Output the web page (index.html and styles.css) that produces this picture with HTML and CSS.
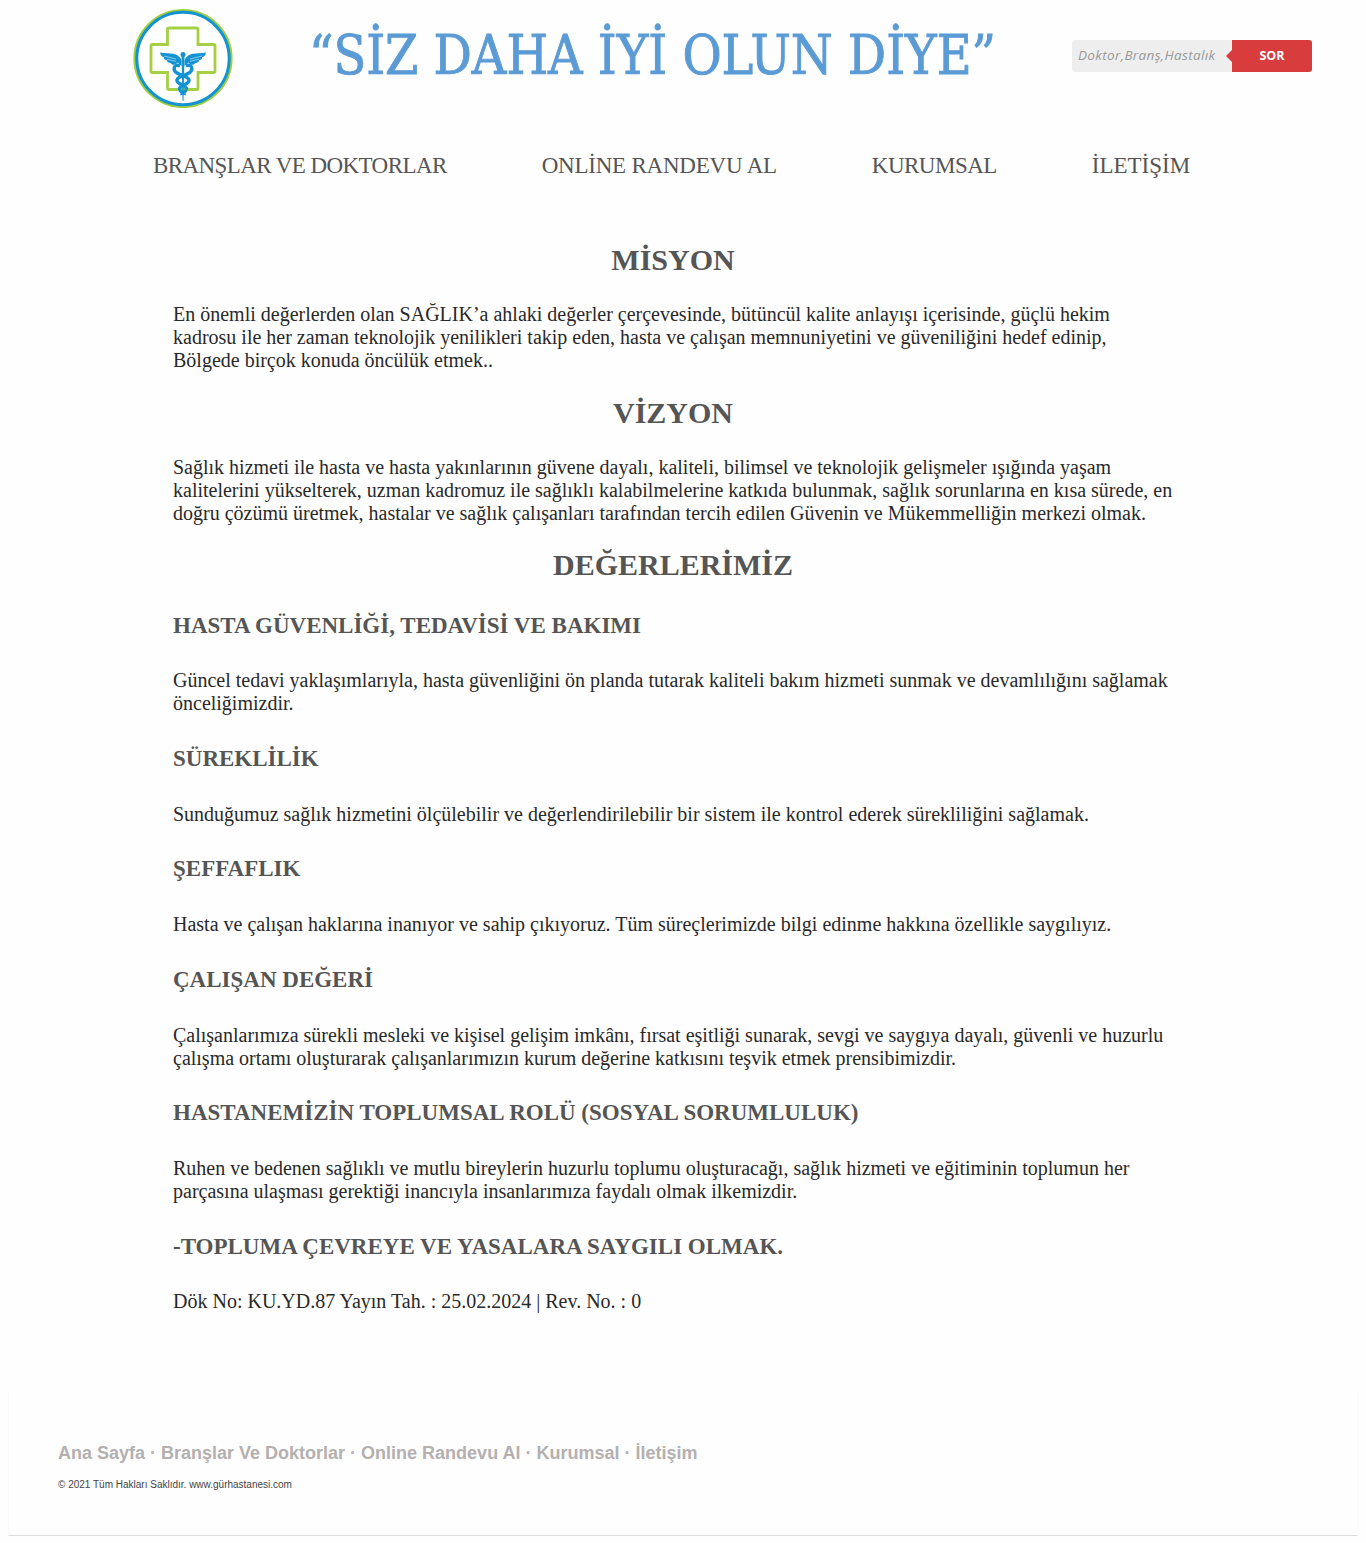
FILE: index.html
```html
<!DOCTYPE html>
<html lang="tr">
<head>
<meta charset="utf-8">
<title>Misyon ve Vizyon</title>
<link rel="stylesheet" href="styles.css">
</head>
<body>
<header class="top">
  <svg class="logo" viewBox="0 0 100 100" width="100" height="100" role="img" aria-label="Logo">
    <circle cx="50" cy="50.5" r="48.3" fill="#fff" stroke="#9fce3d" stroke-width="2.6"/>
    <circle cx="50" cy="50.5" r="46.2" fill="none" stroke="#1493d3" stroke-width="3"/>
    <path d="M36 20H63.500Q65 20 65 21.500V36.500H80.500Q82 36.500 82 38V63Q82 64.500 80.500 64.500H65V80Q65 81.500 63.500 81.500H36Q34.500 81.500 34.500 80V64.500H19.500Q18 64.500 18 63V38Q18 36.500 19.500 36.500H34.500V21.500Q34.500 20 36 20Z" fill="none" stroke="#a5d044" stroke-width="2.800"/>
    <path d="M48.500 52C45 44 37 46 27 44.500C27.500 47.500 29 48.500 31 49.300C30.500 51 32 52 34 52.300C34 54 35.500 55 38 55.200C39 57.500 43 57 44.500 54.500L48.500 58ZM51.500 52C55 44 63 46 73 44.500C72.500 47.500 71 48.500 69 49.300C69.500 51 68 52 66 52.300C66 54 64.500 55 62 55.200C61 57.500 57 57 55.500 54.500L51.500 58Z" fill="#1493d3"/>
    <path d="M31 48L43 51M69 48L57 51M34 51.300L43 53.300M66 51.300L57 53.300" stroke="#fff" stroke-width=".5"/>
    <circle cx="50" cy="46.500" r="2.500" fill="#1493d3"/>
    <path d="M48.500 47H51.500L50.500 93H49.500Z" fill="#1493d3"/>
    <path d="M47 58C41 55 39 62 44 65S57 69 56 73S46 77 46.500 81S52 84 51 87" fill="none" stroke="#1493d3" stroke-width="3.300"/>
    <path d="M53 58C59 55 61 62 56 65S43 69 44 73S54 77 53.500 81S48 84 49 87" fill="none" stroke="#1493d3" stroke-width="3.300"/>
  </svg>
  <svg class="slogan" width="684" height="80" viewBox="0 0 684 80">
    <text class="slogan-text" x="-3" y="64" textLength="687" lengthAdjust="spacingAndGlyphs">“SİZ DAHA İYİ OLUN DİYE”</text>
  </svg>
  <form class="search">
    <input class="search-input" type="text" placeholder="Doktor,Branş,Hastalık">
    <button class="search-button" type="button">SOR</button>
  </form>
</header>
<nav class="menu">
  <a>BRANŞLAR VE DOKTORLAR</a>
  <a>ONLİNE RANDEVU AL</a>
  <a>KURUMSAL</a>
  <a>İLETİŞİM</a>
</nav>
<main class="content">
  <h1>MİSYON</h1>
  <p>En önemli değerlerden olan SAĞLIK’a ahlaki değerler çerçevesinde, bütüncül kalite anlayışı içerisinde, güçlü hekim<br>kadrosu ile her zaman teknolojik yenilikleri takip eden, hasta ve çalışan memnuniyetini ve güveniliğini hedef edinip,<br>Bölgede birçok konuda öncülük etmek..</p>
  <h1>VİZYON</h1>
  <p>Sağlık hizmeti ile hasta ve hasta yakınlarının güvene dayalı, kaliteli, bilimsel ve teknolojik gelişmeler ışığında yaşam<br>kalitelerini yükselterek, uzman kadromuz ile sağlıklı kalabilmelerine katkıda bulunmak, sağlık sorunlarına en kısa sürede, en<br>doğru çözümü üretmek, hastalar ve sağlık çalışanları tarafından tercih edilen Güvenin ve Mükemmelliğin merkezi olmak.</p>
  <h1>DEĞERLERİMİZ</h1>
  <h2>HASTA GÜVENLİĞİ, TEDAVİSİ VE BAKIMI</h2>
  <p>Güncel tedavi yaklaşımlarıyla, hasta güvenliğini ön planda tutarak kaliteli bakım hizmeti sunmak ve devamlılığını sağlamak<br>önceliğimizdir.</p>
  <h2>SÜREKLİLİK</h2>
  <p>Sunduğumuz sağlık hizmetini ölçülebilir ve değerlendirilebilir bir sistem ile kontrol ederek sürekliliğini sağlamak.</p>
  <h2>ŞEFFAFLIK</h2>
  <p>Hasta ve çalışan haklarına inanıyor ve sahip çıkıyoruz. Tüm süreçlerimizde bilgi edinme hakkına özellikle saygılıyız.</p>
  <h2>ÇALIŞAN DEĞERİ</h2>
  <p>Çalışanlarımıza sürekli mesleki ve kişisel gelişim imkânı, fırsat eşitliği sunarak, sevgi ve saygıya dayalı, güvenli ve huzurlu<br>çalışma ortamı oluşturarak çalışanlarımızın kurum değerine katkısını teşvik etmek prensibimizdir.</p>
  <h2>HASTANEMİZİN TOPLUMSAL ROLÜ (SOSYAL SORUMLULUK)</h2>
  <p>Ruhen ve bedenen sağlıklı ve mutlu bireylerin huzurlu toplumu oluşturacağı, sağlık hizmeti ve eğitiminin toplumun her<br>parçasına ulaşması gerektiği inancıyla insanlarımıza faydalı olmak ilkemizdir.</p>
  <h2>-TOPLUMA ÇEVREYE VE YASALARA SAYGILI OLMAK.</h2>
  <p>Dök No: KU.YD.87 Yayın Tah. : 25.02.2024 | Rev. No. : 0</p>
</main>
<footer class="footer">
  <p class="footer-links">Ana Sayfa · Branşlar Ve Doktorlar · Online Randevu Al · Kurumsal · İletişim</p>
  <p class="footer-copy">© 2021 Tüm Hakları Saklıdır. www.gürhastanesi.com</p>
</footer>
</body>
</html>
```
FILE: styles.css
```css
* { box-sizing: border-box; }
body {
  margin: 0;
  background: #fefefe;
  color: #292929;
  font-family: "Liberation Serif", serif;
}
.top {
  display: flex;
  align-items: flex-start;
  height: 140px;
  padding: 8px 54px 0 133px;
}
.logo { flex: none; }
.slogan { flex: none; margin: 2px 0 0 79px; overflow: visible; }
.slogan-text {
  font-family: "DejaVu Serif Condensed", "DejaVu Serif", serif;
  font-stretch: condensed;
  font-size: 55px;
  fill: #5b9bd5;
  stroke: #5b9bd5;
  stroke-width: .9px;
}
.search { display: flex; margin: 32px 0 0 auto; width: 240px; height: 32px; }
.search-input {
  width: 160px;
  padding: 0 6px 2px;
  border: 0;
  border-radius: 3px 0 0 3px;
  background: #eee;
  font: italic 13.5px "Open Sans", sans-serif;
  letter-spacing: .35px;
}
.search-input::placeholder { color: #999; opacity: 1; }
.search-button {
  position: relative;
  width: 80px;
  padding: 0 0 1px;
  border: 0;
  border-radius: 0 3px 3px 0;
  background: #d83c3c;
  color: #fff;
  font: bold 12.5px "Open Sans", sans-serif;
}
.search-button::before {
  content: "";
  position: absolute;
  left: -6px;
  top: 10px;
  border: solid transparent;
  border-width: 6px 6px 6px 0;
  border-right-color: #d83c3c;
}
.menu {
  display: flex;
  gap: 95px;
  height: 103px;
  padding: 13px 0 0 153px;
  font-size: 23px;
  line-height: 26px;
  color: #555;
  white-space: nowrap;
}
.menu a:nth-child(1) { letter-spacing: -.58px; }
.menu a:nth-child(2) { letter-spacing: -.22px; }
.menu a:nth-child(3) { letter-spacing: -.52px; }
.content { width: 1000px; margin-left: 173px; height: 1149px; }
.content h1 {
  margin: 26px 0 25px;
  font-size: 30px;
  line-height: 34px;
  text-align: center;
  color: #555;
}
.content h1:first-child { margin-top: 0; }
.content h1 + p { margin-bottom: 25px; }
.content h1:nth-of-type(2) { margin-top: 25px; }
.content h1:nth-of-type(3) { margin: 24px 0; }
.content h2 {
  margin: 30.6px 0 31.8px;
  font-size: 23px;
  line-height: 25px;
  color: #555;
}
.content p { margin: 0; font-size: 20px; line-height: 23px; white-space: nowrap; }
.content h1 + p { padding-top: .6px; margin-bottom: -.6px; }
.footer {
  height: 144px;
  margin: 0 8px;
  padding: 51px 49px 0;
  border: solid #fafafa;
  border-width: 0 1px 1px;
  border-bottom-color: #ddd;
  font-family: "Liberation Sans", sans-serif;
}
.footer p { margin: 0; }
.footer .footer-links { font-size: 18px; line-height: 21px; font-weight: bold; color: #b4b0b0; }
.footer .footer-copy { margin-top: 15px; font-size: 10px; line-height: 12px; color: #444; }
```
